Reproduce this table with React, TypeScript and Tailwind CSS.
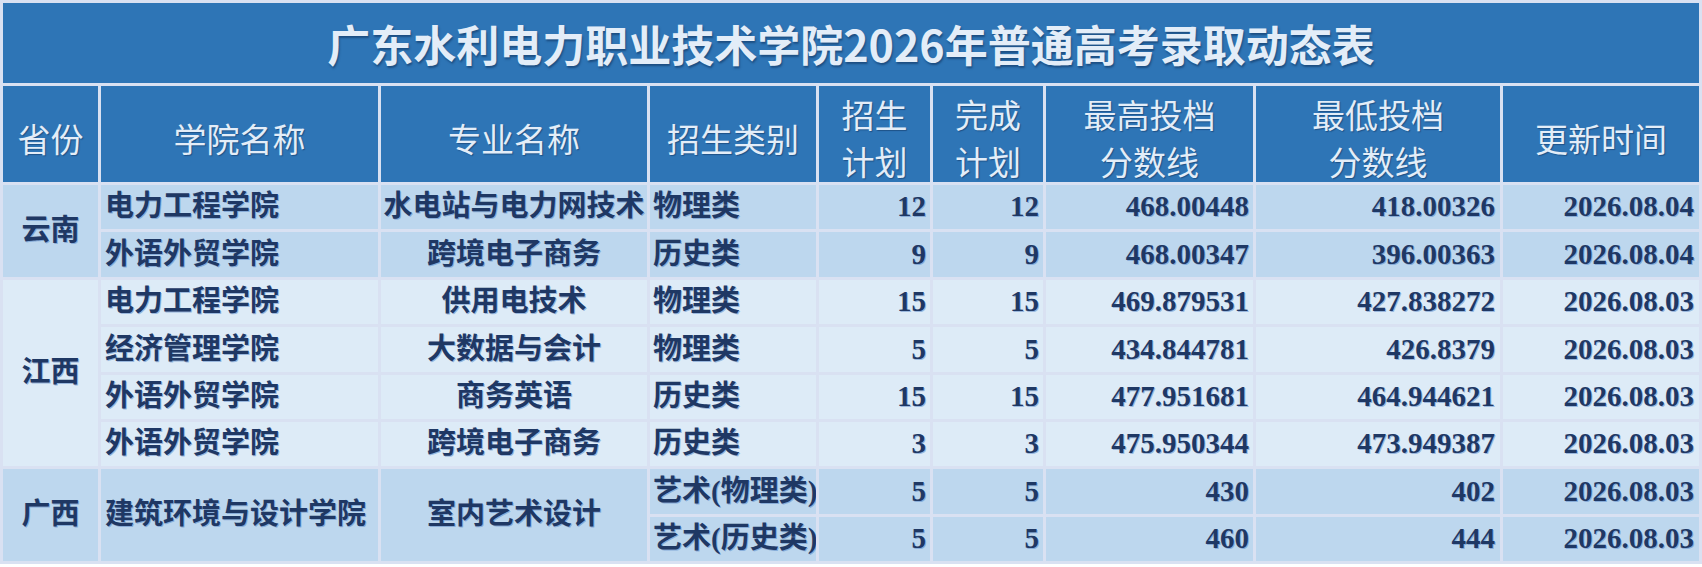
import React from "react";

const HEAD =
  "flex items-center justify-center text-center bg-[#2e75b6] text-[#e3edf8] text-[33px] leading-[47px] pt-2 font-['Noto_Sans_CJK_SC',sans-serif] [text-shadow:1px_1px_1px_rgba(10,40,80,0.45)]";

const CELL =
  "flex items-center overflow-hidden whitespace-nowrap text-[29px] font-bold text-[#1f3864] font-['Liberation_Serif','Noto_Sans_CJK_SC',serif] [text-shadow:1px_1px_0_rgba(70,120,190,0.45)]";

type Row = {
  college?: string;
  collegeSpan?: number;
  major?: string;
  majorSpan?: number;
  cat: string;
  plan: string;
  done: string;
  max: string;
  min: string;
  date: string;
};

const groups: { prov: string; bg: string; rows: Row[] }[] = [
  {
    prov: "云南",
    bg: "bg-[#bdd7ee]",
    rows: [
      { college: "电力工程学院", major: "水电站与电力网技术", cat: "物理类", plan: "12", done: "12", max: "468.00448", min: "418.00326", date: "2026.08.04" },
      { college: "外语外贸学院", major: "跨境电子商务", cat: "历史类", plan: "9", done: "9", max: "468.00347", min: "396.00363", date: "2026.08.04" },
    ],
  },
  {
    prov: "江西",
    bg: "bg-[#ddebf7]",
    rows: [
      { college: "电力工程学院", major: "供用电技术", cat: "物理类", plan: "15", done: "15", max: "469.879531", min: "427.838272", date: "2026.08.03" },
      { college: "经济管理学院", major: "大数据与会计", cat: "物理类", plan: "5", done: "5", max: "434.844781", min: "426.8379", date: "2026.08.03" },
      { college: "外语外贸学院", major: "商务英语", cat: "历史类", plan: "15", done: "15", max: "477.951681", min: "464.944621", date: "2026.08.03" },
      { college: "外语外贸学院", major: "跨境电子商务", cat: "历史类", plan: "3", done: "3", max: "475.950344", min: "473.949387", date: "2026.08.03" },
    ],
  },
  {
    prov: "广西",
    bg: "bg-[#bdd7ee]",
    rows: [
      { college: "建筑环境与设计学院", collegeSpan: 2, major: "室内艺术设计", majorSpan: 2, cat: "艺术(物理类)", plan: "5", done: "5", max: "430", min: "402", date: "2026.08.03" },
      { cat: "艺术(历史类)", plan: "5", done: "5", max: "460", min: "444", date: "2026.08.03" },
    ],
  },
];

const rowStart = ["row-start-3", "row-start-4", "row-start-5", "row-start-6", "row-start-7", "row-start-8", "row-start-9", "row-start-10"];
const rowSpan: Record<number, string> = { 1: "row-span-1", 2: "row-span-2", 4: "row-span-4" };

export default function App() {
  const cells: React.ReactNode[] = [];
  let r = 0;
  groups.forEach((g, gi) => {
    cells.push(
      <div key={`p${gi}`} className={`${CELL} ${g.bg} col-start-1 ${rowStart[r]} ${rowSpan[g.rows.length]} justify-center`}>
        {g.prov}
      </div>
    );
    g.rows.forEach((row, ri) => {
      const rs = rowStart[r + ri];
      const k = `${gi}-${ri}`;
      if (row.college) {
        cells.push(
          <div key={`c${k}`} className={`${CELL} ${g.bg} col-start-2 ${rs} ${rowSpan[row.collegeSpan || 1]} pl-[4px]`}>
            {row.college}
          </div>
        );
      }
      if (row.major) {
        cells.push(
          <div key={`m${k}`} className={`${CELL} ${g.bg} col-start-3 ${rs} ${rowSpan[row.majorSpan || 1]} justify-center`}>
            {row.major}
          </div>
        );
      }
      cells.push(
        <div key={`t${k}`} className={`${CELL} ${g.bg} col-start-4 ${rs} pl-[3px]`}>{row.cat}</div>,
        <div key={`a${k}`} className={`${CELL} ${g.bg} col-start-5 ${rs} justify-end pr-[4px]`}>{row.plan}</div>,
        <div key={`b${k}`} className={`${CELL} ${g.bg} col-start-6 ${rs} justify-end pr-[4px]`}>{row.done}</div>,
        <div key={`x${k}`} className={`${CELL} ${g.bg} col-start-7 ${rs} justify-end pr-[4px]`}>{row.max}</div>,
        <div key={`n${k}`} className={`${CELL} ${g.bg} col-start-8 ${rs} justify-end pr-[5px]`}>{row.min}</div>,
        <div key={`d${k}`} className={`${CELL} ${g.bg} col-start-9 ${rs} justify-end pr-[5px]`}>{row.date}</div>
      );
    });
    r += g.rows.length;
  });

  return (
    <div className="w-[1702px] h-[567px] bg-white">
      <div className="w-[1702px] h-[564px] bg-[#d9e1f2] p-[3px] grid gap-[3px] grid-cols-[95px_277px_266px_166px_111px_110px_207px_244px_196px] grid-rows-[80px_96px_repeat(8,minmax(0,1fr))]">
        <div className="col-span-9 row-start-1 flex items-center justify-center bg-[#2e75b6] text-[#e3edf8] text-[43px] font-bold font-['Noto_Sans_CJK_SC',sans-serif] [text-shadow:1px_2px_2px_rgba(10,40,80,0.5)]">
          广东水利电力职业技术学院2026年普通高考录取动态表
        </div>
        <div className={`${HEAD} row-start-2 col-start-1`}>省份</div>
        <div className={`${HEAD} row-start-2 col-start-2`}>学院名称</div>
        <div className={`${HEAD} row-start-2 col-start-3`}>专业名称</div>
        <div className={`${HEAD} row-start-2 col-start-4`}>招生类别</div>
        <div className={`${HEAD} row-start-2 col-start-5`}>招生<br />计划</div>
        <div className={`${HEAD} row-start-2 col-start-6`}>完成<br />计划</div>
        <div className={`${HEAD} row-start-2 col-start-7`}>最高投档<br />分数线</div>
        <div className={`${HEAD} row-start-2 col-start-8`}>最低投档<br />分数线</div>
        <div className={`${HEAD} row-start-2 col-start-9`}>更新时间</div>
        {cells}
      </div>
    </div>
  );
}
